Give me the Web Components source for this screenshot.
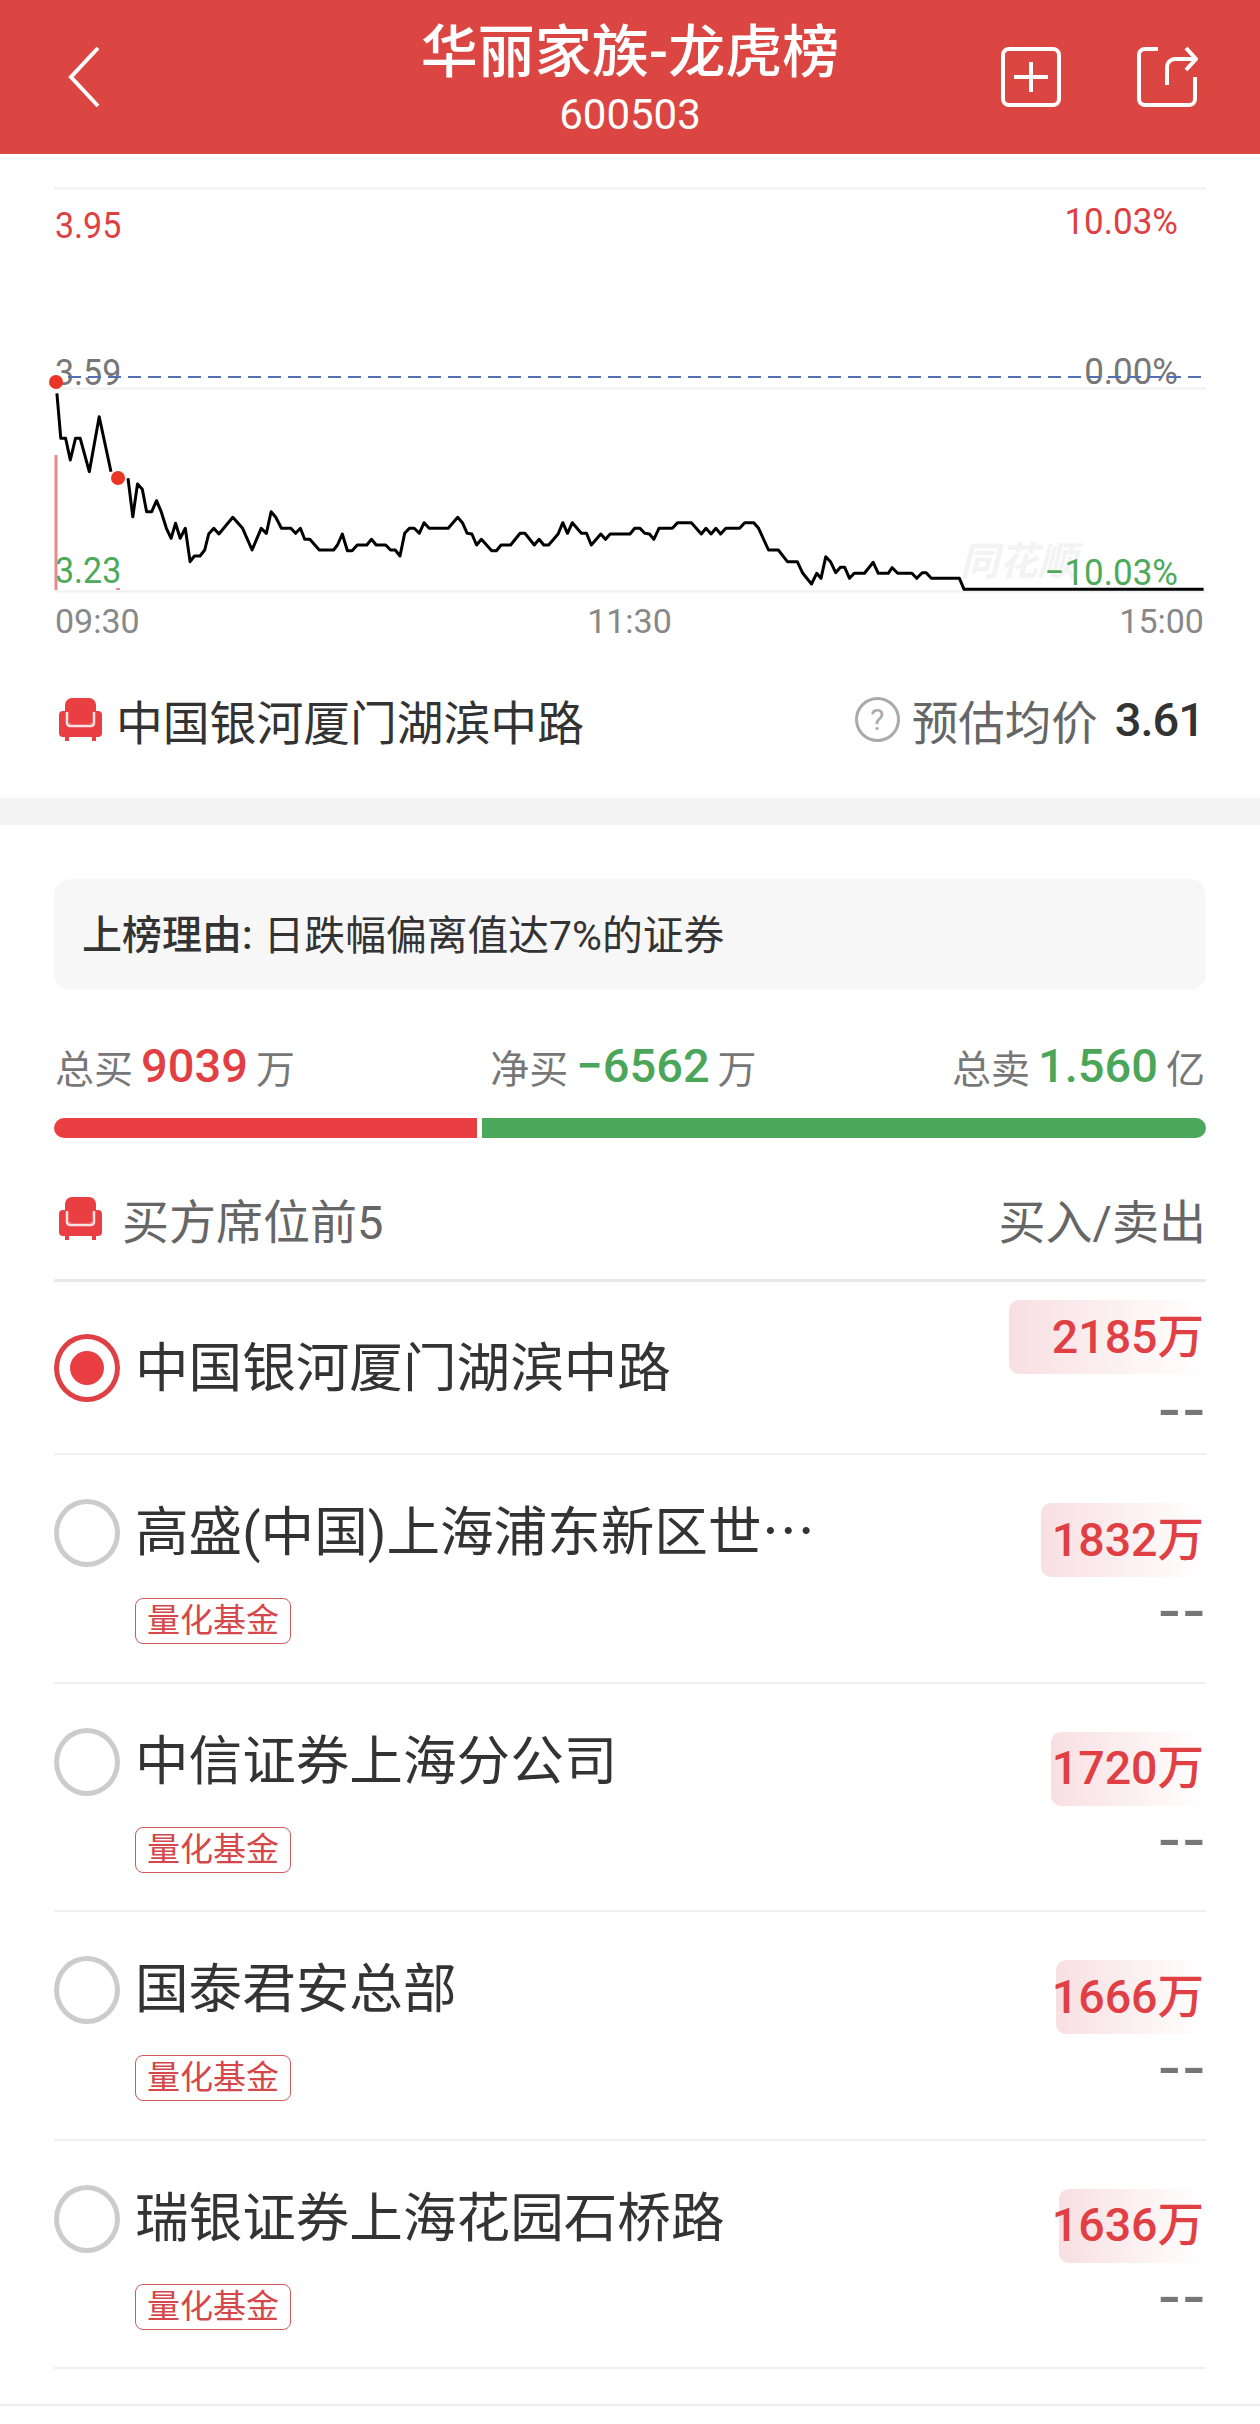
<!DOCTYPE html>
<html lang="zh-CN">
<head>
<meta charset="utf-8">
<title>龙虎榜</title>
<style>
	html, body {
		margin: 0;
		background: #fff;
		font-family: Roboto, "Noto Sans CJK SC", sans-serif;
		color: #333;
	}
	main {
		display: block;
		width: 1260px;
		height: 2424px;
		overflow: hidden;
	}
</style>
</head>
<body>
<main>
	<top-bar title-text="华丽家族-龙虎榜" code="600503"></top-bar>
	<trend-chart></trend-chart>
	<seat-pick name="中国银河厦门湖滨中路" price="3.61"></seat-pick>
	<gray-band></gray-band>
	<reason-card label="上榜理由:">日跌幅偏离值达7%的证券</reason-card>
	<trade-summary></trade-summary>
	<split-bar></split-bar>
	<section-head title-text="买方席位前5" side="买入/卖出"></section-head>
	<seat-row name="中国银河厦门湖滨中路" value="2185" selected></seat-row>
	<seat-row name="高盛(中国)上海浦东新区世" more value="1832" tag="量化基金"></seat-row>
	<seat-row name="中信证券上海分公司" value="1720" tag="量化基金"></seat-row>
	<seat-row name="国泰君安总部" value="1666" tag="量化基金"></seat-row>
	<seat-row name="瑞银证券上海花园石桥路" value="1636" tag="量化基金"></seat-row>
	<page-end></page-end>
</main>
<script>
const SOFA = `
	<svg width="43" height="43" viewBox="0 0 43 43" style="display:block;flex:none">
		<rect x="6" y="0" width="31" height="26" rx="7" fill="#e93f43"/>
		<rect x="0" y="13" width="10" height="26" rx="4" fill="#e93f43"/>
		<rect x="33" y="13" width="10" height="26" rx="4" fill="#e93f43"/>
		<rect x="3" y="26" width="37" height="13" rx="2" fill="#e93f43"/>
		<rect x="6" y="38" width="4" height="5" fill="#e93f43"/>
		<rect x="33" y="38" width="4" height="5" fill="#e93f43"/>
		<path d="M8 14 V25 a3 3 0 0 0 3 3 H32 a3 3 0 0 0 3 -3 V14" fill="none" stroke="#fbe3e3" stroke-width="2.5"/>
	</svg>
`;

class TopBar extends HTMLElement {
	connectedCallback() {
		this.attachShadow({ mode: 'open' });
		this.shadowRoot.innerHTML = `
			<style>
				:host {
					display: grid;
					grid-template-columns: 1fr auto 1fr;
					align-items: center;
					height: 154px;
					background: #dc4642;
					color: #fff;
				}
				.back { padding-left: 66px; }
				.center { text-align: center; padding-top: 6px; }
				.title { font-size: 57px; line-height: 62px; font-weight: 500; }
				.code { font-size: 42px; line-height: 46px; margin-top: 8px; }
				.actions {
					display: flex;
					justify-content: flex-end;
					gap: 74px;
					padding-right: 62px;
				}
				svg { display: block; fill: none; stroke: #fff; stroke-width: 4; }
			</style>
			<div class="back">
				<svg width="36" height="64" viewBox="0 0 36 64">
					<path d="M32 3 L5 32 L32 61" stroke-linejoin="miter"/>
				</svg>
			</div>
			<div class="center">
				<div class="title">${this.getAttribute('title-text')}</div>
				<div class="code">${this.getAttribute('code')}</div>
			</div>
			<div class="actions">
				<svg width="62" height="62" viewBox="0 0 62 62">
					<rect x="3" y="3" width="56" height="56" rx="6"/>
					<path d="M31 16 V46 M14 31 H48"/>
				</svg>
				<svg width="62" height="62" viewBox="0 0 62 62">
					<path d="M22 3 H9 a6 6 0 0 0 -6 6 V53 a6 6 0 0 0 6 6 H53 a6 6 0 0 0 6 -6 V31"/>
					<path d="M50 2 L60 13 L50 24"/>
					<path d="M59 13 H39 a8 8 0 0 0 -8 8 V39"/>
				</svg>
			</div>
		`;
	}
}

class TrendChart extends HTMLElement {
	connectedCallback() {
		// traced points, left and right half have their own x origin
		const first = [[68,640],[78,775],[90,775],[102,840],[115,775],[127,775],[150,875],[175,710],[205,875]];
		const left = [[248,895],[260,1010],[272,912],[284,928],[295,995],[308,995],[320,962],[332,995],[345,1045],[357,1075],[368,1030],[380,1075],[393,1045],[405,1145],[416,1128],[430,1128],[442,1110],[452,1062],[465,1045],[478,1062],[513,1012],[538,1045],[562,1110],[585,1045],[598,1060],[610,995],[622,1012],[636,1045],[660,1045],[672,1060],[684,1045],[695,1078],[708,1078],[732,1110],[768,1110],[778,1095],[790,1062],[803,1112],[815,1112],[828,1095],[852,1095],[864,1078],[876,1095],[900,1095],[912,1110],[924,1110],[936,1128],[948,1060],[960,1045],[972,1045],[985,1060],[997,1028],[1010,1045],[1058,1045],[1082,1012],[1094,1028],[1106,1060],[1118,1062],[1130,1095],[1142,1078],[1168,1112],[1180,1112],[1192,1095],[1216,1095],[1240,1060],[1252,1060],[1276,1095],[1288,1078],[1300,1095],[1312,1095],[1336,1062],[1348,1028],[1360,1060],[1372,1028],[1395,1060],[1408,1060],[1420,1095],[1444,1062],[1456,1078],[1468,1062],[1518,1062],[1530,1045]];
		const right = [[0,1045],[12,1060],[24,1062],[35,1078],[48,1045],[82,1045],[95,1028],[130,1028],[155,1062],[167,1045],[180,1062],[192,1045],[204,1062],[217,1045],[252,1045],[265,1028],[288,1028],[300,1045],[325,1110],[350,1110],[373,1145],[398,1145],[412,1180],[434,1212],[447,1180],[458,1195],[470,1130],[482,1145],[495,1178],[507,1162],[518,1162],[530,1195],[542,1180],[568,1180],[590,1147],[603,1180],[628,1180],[638,1163],[652,1180],[688,1180],[700,1195],[714,1178],[724,1178],[737,1195],[808,1195],[820,1228],[1426,1228]];

		const toPoints = (list, originX) => list
			.map(([x, y]) => `${(originX + x / 2.53 - 54).toFixed(1)},${(y / 3).toFixed(1)}`)
			.join(' ');
		const main = toPoints(left, 30) + ' ' + toPoints(right, 640);

		this.attachShadow({ mode: 'open' });
		this.shadowRoot.innerHTML = `
			<style>
				:host {
					display: block;
					margin: 26px 54px 0;
					width: 1152px;
				}
				.plot { position: relative; height: 420px; }
				svg { position: absolute; left: 0; top: 0; overflow: visible; }
				.label {
					position: absolute;
					font-size: 34px;
					line-height: 40px;
					transform: scaleY(1.08);
				}
				.pct { font-size: 35px; right: 28px; }
				.red { color: #de3f43; }
				.green { color: #4caa5a; }
				.gray { color: #777; }
				.mark {
					position: absolute;
					left: 906px;
					top: 360px;
					font-size: 39px;
					line-height: 44px;
					font-weight: 700;
					font-style: italic;
					color: #f3f3f3;
				}
				.times {
					display: flex;
					justify-content: space-between;
					height: 40px;
					font-size: 34px;
					line-height: 42px;
					color: #888;
					padding: 0 2px 0 1px;
				}
			</style>
			<div class="plot">
				<div class="mark">同花顺</div>
				<div class="label red" style="left:1px;top:25px">3.95</div>
				<div class="label gray" style="left:1px;top:172px">3.59</div>
				<div class="label green" style="left:1px;top:370px">3.23</div>
				<div class="label pct red" style="top:22px">10.03%</div>
				<div class="label pct gray" style="top:172px">0.00%</div>
				<svg width="1152" height="420" viewBox="0 0 1152 420">
					<line x1="0" y1="8.5" x2="1152" y2="8.5" stroke="#f0f0f0" stroke-width="2"/>
					<line x1="0" y1="208.5" x2="1152" y2="208.5" stroke="#f0f0f0" stroke-width="2"/>
					<line x1="0" y1="411.5" x2="1152" y2="411.5" stroke="#f0f0f0" stroke-width="2"/>
					<line x1="14" y1="197" x2="1152" y2="197" stroke="#5470b0" stroke-width="2" stroke-dasharray="13 7"/>
					<line x1="2" y1="275" x2="2" y2="410" stroke="#e88a8a" stroke-width="3"/>
					<rect x="62" y="408" width="4" height="2" fill="#e88a8a"/>
					<polyline points="${toPoints(first, 30)}" fill="none" stroke="#000" stroke-width="3" stroke-linejoin="round"/>
					<polyline points="${main}" fill="none" stroke="#000" stroke-width="3" stroke-linejoin="round"/>
					<circle cx="2" cy="202" r="7" fill="#ea3425"/>
					<circle cx="64" cy="298" r="7" fill="#ea3425"/>
				</svg>
				<div class="label pct green" style="top:373px">−10.03%</div>
			</div>
			<div class="times"><span>09:30</span><span>11:30</span><span>15:00</span></div>
		`;
	}
}

class SeatPick extends HTMLElement {
	connectedCallback() {
		this.attachShadow({ mode: 'open' });
		this.shadowRoot.innerHTML = `
			<style>
				:host {
					display: flex;
					align-items: center;
					height: 158px;
					padding: 0 56px 0 59px;
					box-sizing: border-box;
					font-size: 46.5px;
				}
				.name { margin-left: 14px; color: #333; flex: 1; font-size: 46.8px; }
				.help {
					width: 39px;
					height: 39px;
					border: 3px solid #aaa;
					border-radius: 50%;
					color: #aaa;
					font-size: 30px;
					line-height: 39px;
					text-align: center;
				}
				.label { margin-left: 12px; color: #666; }
				.price { margin-left: 17px; color: #333; font-weight: 500; font-size: 47px; letter-spacing: -1px; }
			</style>
			${SOFA}
			<span class="name">${this.getAttribute('name')}</span>
			<span class="help">?</span>
			<span class="label">预估均价</span>
			<span class="price">${this.getAttribute('price')}</span>
		`;
	}
}

class GrayBand extends HTMLElement {
	connectedCallback() {
		this.attachShadow({ mode: 'open' });
		this.shadowRoot.innerHTML = `<style>:host { display: block; height: 27px; background: #f4f4f4; }</style>`;
	}
}

class ReasonCard extends HTMLElement {
	connectedCallback() {
		this.attachShadow({ mode: 'open' });
		this.shadowRoot.innerHTML = `
			<style>
				:host {
					display: flex;
					align-items: center;
					margin: 54px 54px 0;
					height: 111px;
					padding: 0 0 5px 28px;
					box-sizing: border-box;
					background: #f7f7f7;
					border-radius: 16px;
					font-size: 40.8px;
					color: #333;
				}
				b { font-weight: 500; font-size: 40px; margin-right: 11px; }
			</style>
			<b>${this.getAttribute('label')}</b><slot></slot>
		`;
	}
}

class TradeSummary extends HTMLElement {
	connectedCallback() {
		const item = (label, value, unit, cls) =>
			`<div class="item"><span>${label}</span><b class="${cls}">${value}</b><span>${unit}</span></div>`;
		this.attachShadow({ mode: 'open' });
		this.shadowRoot.innerHTML = `
			<style>
				:host {
					display: flex;
					justify-content: space-between;
					align-items: center;
					margin: 46px 54px 0;
					height: 60px;
					padding: 0 1px;
					font-size: 39px;
					color: #777;
				}
				.item { display: flex; align-items: center; gap: 8px; }
				b { font-size: 47px; font-weight: 500; line-height: 60px; }
				.red { color: #e23f44; }
				.green { color: #4ba65a; }
			</style>
			${item('总买', '9039', '万', 'red')}
			${item('净买', '−6562', '万', 'green')}
			${item('总卖', '1.560', '亿', 'green')}
		`;
	}
}

class SplitBar extends HTMLElement {
	connectedCallback() {
		this.attachShadow({ mode: 'open' });
		this.shadowRoot.innerHTML = `
			<style>
				:host {
					display: flex;
					gap: 5px;
					margin: 22px 54px 0;
					height: 20px;
				}
				.buy { width: 423px; background: #e93f43; border-radius: 10px 0 0 10px; }
				.sell { flex: 1; background: #4ca85b; border-radius: 0 10px 10px 0; }
			</style>
			<div class="buy"></div><div class="sell"></div>
		`;
	}
}

class SectionHead extends HTMLElement {
	connectedCallback() {
		this.attachShadow({ mode: 'open' });
		this.shadowRoot.innerHTML = `
			<style>
				:host {
					display: flex;
					align-items: center;
					margin: 0 54px;
					height: 144px;
					padding: 20px 0 0 5px;
					box-sizing: border-box;
					border-bottom: 3px solid #e9e9e9;
					font-size: 47px;
					color: #666;
				}
				.title { margin-left: 20px; flex: 1; }
			</style>
			${SOFA}
			<span class="title">${this.getAttribute('title-text')}</span>
			<span>${this.getAttribute('side')}</span>
		`;
	}
}

class SeatRow extends HTMLElement {
	connectedCallback() {
		const selected = this.hasAttribute('selected');
		const tag = this.getAttribute('tag');
		const value = Number(this.getAttribute('value'));
		// bar length follows the amount
		const barWidth = Math.round(value * 0.09);

		this.attachShadow({ mode: 'open' });
		this.shadowRoot.innerHTML = `
			<style>
				:host {
					display: grid;
					grid-template-columns: 66px 1fr auto;
					column-gap: 15px;
					margin: 0 54px;
					height: ${selected ? 173 : 228.6}px;
					box-sizing: border-box;
					border-bottom: 2px solid #f0f0f0;
				}
				.radio {
					margin-top: ${selected ? 52 : 44}px;
					width: 66px;
					height: 68px;
					box-sizing: border-box;
					border: 5px solid ${selected ? '#de4044' : '#ccc'};
					border-radius: 50%;
					display: flex;
					align-items: center;
					justify-content: center;
				}
				.dot { width: 34px; height: 34px; border-radius: 50%; background: #e93f43; }
				.text { padding-top: ${selected ? 53 : 44}px; }
				.name { font-size: 53.6px; line-height: 68px; color: #333; white-space: nowrap; }
				.more { font-family: "Noto Sans CJK SC", sans-serif; line-height: 0; }
				.tag {
					display: inline-block;
					margin-top: 31px;
					padding: 0 11px;
					height: 46px;
					box-sizing: border-box;
					border: 1.5px solid #d05a5a;
					border-radius: 8px;
					font-size: 33px;
					line-height: 43px;
					color: #d4484b;
				}
				.amounts {
					display: flex;
					flex-direction: column;
					align-items: flex-end;
					padding-top: ${selected ? 18 : 48}px;
				}
				.bar {
					display: flex;
					justify-content: flex-end;
					align-items: center;
					width: ${barWidth}px;
					height: 74px;
					padding: 0 2px 10px 0;
					box-sizing: border-box;
					border-radius: 10px 0 0 10px;
					background: linear-gradient(90deg, #f8dfe2, #fff);
					font-size: 46.5px;
					font-weight: 500;
					color: #e04044;
					white-space: nowrap;
				}
				.none {
					margin-top: ${selected ? 10 : 8}px;
					font-size: 46px;
					line-height: 54px;
					font-weight: 700;
					color: #777;
					transform: scaleX(1.35);
					transform-origin: right;
				}
			</style>
			<div class="radio">${selected ? '<div class="dot"></div>' : ''}</div>
			<div class="text">
				<div class="name">${this.getAttribute('name')}${this.hasAttribute('more') ? '<span class="more">…</span>' : ''}</div>
				${tag ? `<span class="tag">${tag}</span>` : ''}
			</div>
			<div class="amounts">
				<div class="bar">${value}万</div>
				<div class="none">--</div>
			</div>
		`;
	}
}

class PageEnd extends HTMLElement {
	connectedCallback() {
		this.attachShadow({ mode: 'open' });
		this.shadowRoot.innerHTML = `<style>:host { display: block; margin-top: 35px; height: 2px; background: #eee; }</style>`;
	}
}

customElements.define('top-bar', TopBar);
customElements.define('trend-chart', TrendChart);
customElements.define('seat-pick', SeatPick);
customElements.define('gray-band', GrayBand);
customElements.define('reason-card', ReasonCard);
customElements.define('trade-summary', TradeSummary);
customElements.define('split-bar', SplitBar);
customElements.define('section-head', SectionHead);
customElements.define('seat-row', SeatRow);
customElements.define('page-end', PageEnd);
</script>
</body>
</html>
